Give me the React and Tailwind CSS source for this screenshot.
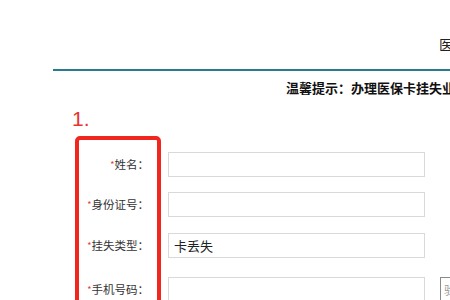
export default function App() {
  const font = { fontFamily: '"Noto Sans CJK SC", "Noto Sans", sans-serif' };
  const rows = [
    { label: "姓名", value: "", mt: "mt-[54px]" },
    { label: "身份证号", value: "", mt: "mt-[15px]" },
    { label: "挂失类型", value: "卡丢失", mt: "mt-[16px]" },
    { label: "手机号码", value: "", mt: "mt-[19px]", extra: true },
  ];
  return (
    <div className="relative w-[450px] h-[300px] overflow-hidden bg-white text-[#333]" style={font}>
      <div className="h-[69px] pt-[34px] pl-[439px] whitespace-nowrap text-[14px] leading-[20px] text-[#222]">
        医保卡挂失
      </div>
      <div className="ml-[53px] h-[2px] bg-[#2b7b8e]" />
      <div className="mt-[7px] pl-[286px] whitespace-nowrap text-[13px] leading-[20px] font-bold text-[#111]">
        温馨提示：办理医保卡挂失业务需本人携带身份证
      </div>
      <div className="flex flex-col">
        {rows.map((r) => (
          <div key={r.label} className={`flex items-center whitespace-nowrap ${r.mt}`}>
            <div className="w-[149px] shrink-0 text-right text-[11.5px] leading-[25px] text-[#333]">
              <span className="text-[#e53935] text-[9px] align-top">*</span>
              {r.label}：
            </div>
            <div className="ml-[19px] shrink-0 w-[257px] h-[25px] border border-[#d9d9d9] flex items-center pl-[5px] text-[13px] text-[#222]">
              {r.value}
            </div>
            {r.extra && (
              <div className="ml-[15px] shrink-0 h-[25px] w-[60px] border border-[#8a8a8a] flex items-center pl-[3px] text-[12px] text-[#999]">
                验证码
              </div>
            )}
          </div>
        ))}
      </div>
      <div
        className="absolute left-[72px] top-[107px] text-[21px] leading-[24px] text-[#e8342c]"
        style={{ fontFamily: '"Liberation Sans", Arial, sans-serif' }}
      >
        1.
      </div>
      <div className="absolute left-[75px] top-[136px] w-[86px] h-[200px] border-[4px] border-[#f0261f] rounded-[5px]" />
    </div>
  );
}
